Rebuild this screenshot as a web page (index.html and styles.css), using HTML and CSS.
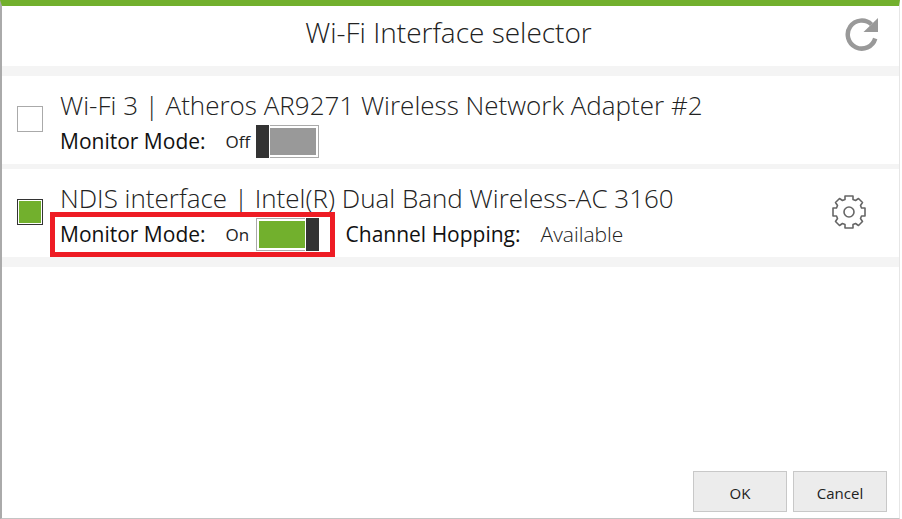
FILE: index.html
```html
<!DOCTYPE html>
<html lang="en">
<head>
    <meta charset="UTF-8">
    <meta name="viewport" content="width=device-width, initial-scale=1.0">
    <title>Wi-Fi Interface selector</title>
    <link rel="stylesheet" href="styles.css">
</head>
<body>
    <div class="window">
        <header class="header">
            <h1>Wi-Fi Interface selector</h1>
            <button class="icon-button refresh" aria-label="Refresh">
                <svg width="34" height="34" viewBox="0 0 34 34">
                    <path d="M30.200 21.500A14 14 0 1 1 26.500 7.500" fill="none" stroke="#999" stroke-width="4.500"/>
                    <path d="M33 1v14H18.500z" fill="#999"/>
                </svg>
            </button>
        </header>

        <ul class="interfaces">
            <li class="interface">
                <input type="checkbox" class="pick" id="wifi3">
                <div class="details">
                    <label class="name" for="wifi3">Wi-Fi 3 | Atheros AR9271 Wireless Network Adapter #2</label>
                    <div class="options">
                        <div class="mode">
                            <label class="label" for="wifi3Monitor">Monitor Mode:</label>
                            <span class="state">Off</span>
                            <input type="checkbox" class="toggle" id="wifi3Monitor">
                        </div>
                    </div>
                </div>
            </li>
            <li class="interface">
                <input type="checkbox" class="pick" id="ndis" checked>
                <div class="details">
                    <label class="name" for="ndis">NDIS interface | Intel(R) Dual Band Wireless-AC 3160</label>
                    <div class="options">
                        <div class="mode highlight">
                            <label class="label" for="ndisMonitor">Monitor Mode:</label>
                            <span class="state">On</span>
                            <input type="checkbox" class="toggle" id="ndisMonitor" checked>
                        </div>
                        <span class="label hopping">Channel Hopping:</span>
                        <span class="value">Available</span>
                    </div>
                </div>
                <button class="icon-button" aria-label="Settings">
                    <svg width="34" height="34" viewBox="-17 -17 34 34" fill="none" stroke="#666" stroke-width="1.600" stroke-linejoin="round">
                        <path d="M-4-16H4V-12.500L6.500-11.500L9.500-13.500L13.500-9.500L11.500-6.500L12.500-4H16V4H12.500L11.500 6.500L13.500 9.500L9.500 13.500L6.500 11.500L4 12.500V16H-4V12.500L-6.500 11.500L-9.500 13.500L-13.500 9.500L-11.500 6.500L-12.500 4H-16V-4H-12.500L-11.500-6.500L-13.500-9.500L-9.500-13.500L-6.500-11.500L-4-12.500Z"/>
                        <circle r="5"/>
                    </svg>
                </button>
            </li>
        </ul>

        <footer class="footer">
            <button class="button">OK</button>
            <button class="button">Cancel</button>
        </footer>
    </div>
</body>
</html>
```
FILE: styles.css
```css
* {
    box-sizing: border-box;
}

body {
    margin: 0;
    padding-right: 2px;
    background: #fff;
    color: #222;
    font-family: "Open Sans", "Noto Sans", sans-serif;
    font-weight: 300;
}

.window {
    display: flex;
    flex-direction: column;
    min-height: 100vh;
    border-top: 6px solid #72b02d;
    border-right: 1px solid #e6e6e6;
    border-bottom: 1px solid #c4c4c4;
    border-left: 2px solid #aaa;
}

.header {
    display: grid;
    grid-template-columns: 1fr auto 1fr;
    align-items: center;
    height: 70px;
    padding-right: 20px;
    border-bottom: 10px solid #f4f4f4;
}

h1 {
    grid-column: 2;
    margin: 0;
    padding: 0 0 8px 16px;
    font-size: 28px;
    font-weight: 300;
    line-height: 52px;
}

.icon-button {
    display: flex;
    padding: 0;
    border: none;
    background: none;
    cursor: pointer;
}

.refresh {
    justify-self: end;
    padding-bottom: 4px;
}

.interfaces {
    margin: 0;
    padding: 0;
    list-style: none;
    border-bottom: 5px solid #f4f4f4;
}

.interface {
    display: flex;
    align-items: center;
    height: 93px;
    padding: 0 33px 2px 15px;
    border-bottom: 5px solid #f4f4f4;
}

.pick {
    appearance: none;
    width: 26px;
    height: 26px;
    margin: 0 17px 0 0;
    border: 1px solid #aaa;
    background: #fff;
}

.pick:checked {
    border-color: #333;
    background: #72b02d;
    box-shadow: inset 0 0 0 1px #fff;
}

.details {
    flex: 1;
    padding-top: 8px;
}

.name {
    display: block;
    font-size: 26px;
    line-height: 36px;
}

.options {
    display: flex;
    align-items: center;
    height: 36px;
}

.mode {
    position: relative;
    display: flex;
    align-items: center;
}

/* red frame around the monitor mode switch */
.highlight::after {
    content: "";
    position: absolute;
    inset: -6px -16px -6px -10px;
    border: 5px solid #ee1c24;
    pointer-events: none;
}

.label {
    color: #111;
    font-size: 21px;
    font-weight: 400;
}

.state {
    width: 30px;
    margin-left: 20px;
    font-size: 17px;
    font-weight: 400;
}

.toggle {
    display: flex;
    appearance: none;
    width: 63px;
    height: 33px;
    margin: 0;
    border: 1px solid #aaa;
    background: #999;
    box-shadow: inset 0 0 0 2px #fff;
}

/* the knob covers the track's border */
.toggle::before {
    content: "";
    width: 13px;
    margin: -1px;
    border-right: 1px solid #fff;
    background: #333;
}

.toggle:checked {
    justify-content: flex-end;
    background: #72b02d;
}

.toggle:checked::before {
    border-right: none;
    border-left: 1px solid #fff;
}

.hopping {
    margin-left: 27px;
}

.value {
    margin-left: 20px;
    font-size: 21px;
}

.footer {
    display: flex;
    justify-content: flex-end;
    gap: 6px;
    margin-top: auto;
    padding: 0 12px 6px;
}

.button {
    width: 94px;
    height: 41px;
    padding: 2px 0 0;
    border: 1px solid #c8c8c8;
    background: #ececec;
    color: #222;
    font-family: inherit;
    font-size: 15px;
    cursor: pointer;
}
```
